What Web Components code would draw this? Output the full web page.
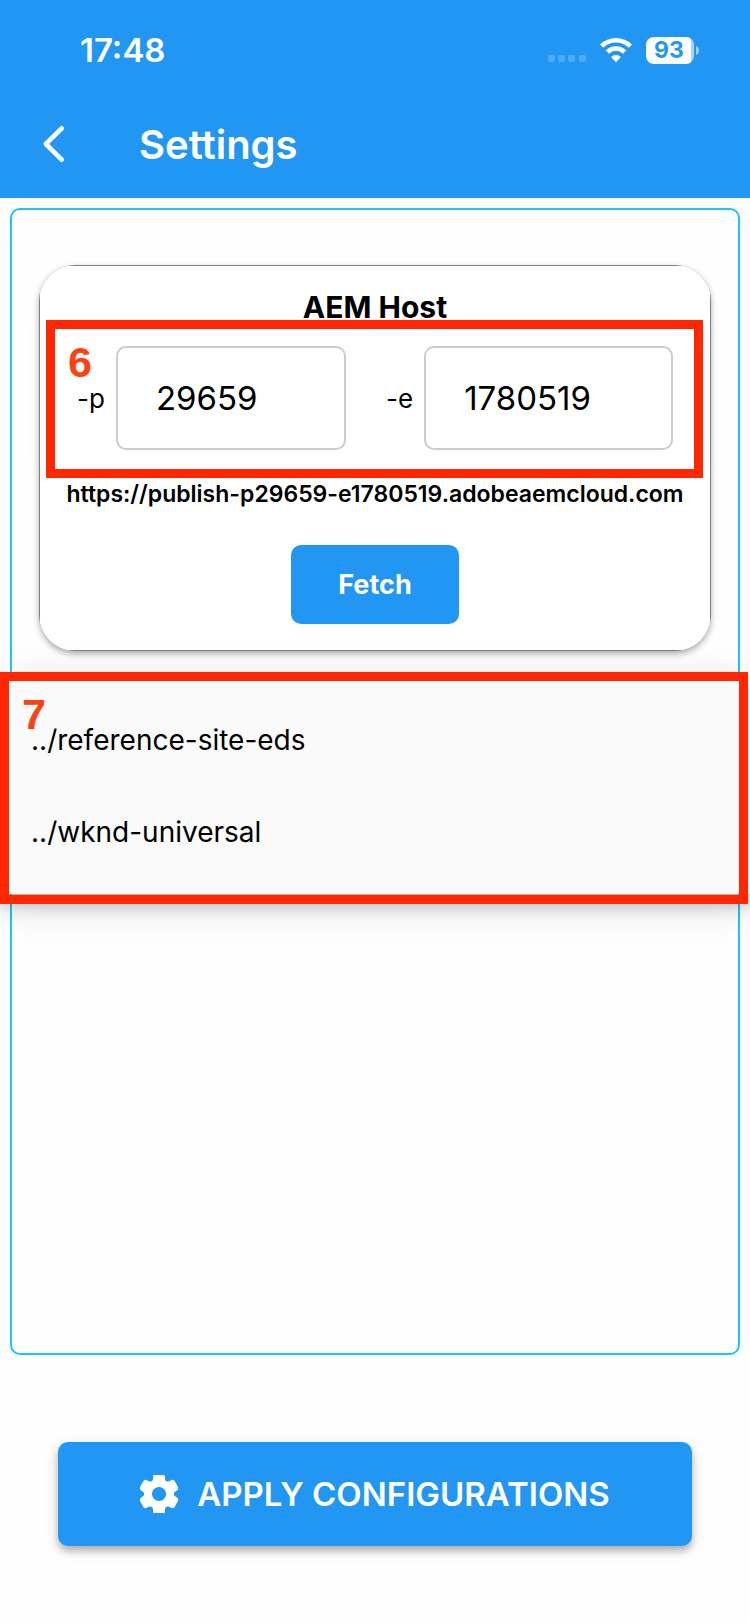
<!DOCTYPE html>
<html lang="en">
<head>
<meta charset="utf-8">
<meta name="viewport" content="width=device-width, initial-scale=1">
<title>Settings</title>
<style>
    body {
        margin: 0;
        background: #fefefe;
        color: #000;
        font-family: Inter, "Liberation Sans", sans-serif;
    }
</style>
</head>
<body>
<settings-page></settings-page>

<script>
function define(name, html, setup) {
    customElements.define(name, class extends HTMLElement {
        constructor() {
            super();
            this.attachShadow({mode: 'open'}).innerHTML = html;
        }

        connectedCallback() {
            if (setup) {
                setup(this, this.shadowRoot);
            }
        }
    });
}

define('status-bar', `
    <style>
        :host {
            display: flex;
            align-items: center;
            justify-content: space-between;
            box-sizing: border-box;
            height: 100px;
            padding: 0 51px 0 80px;
            color: #fff;
            font-size: 33px;
            font-weight: 600;
        }

        .icons {
            display: flex;
            align-items: center;
            gap: 14px;
        }

        svg {
            display: block;
        }

        .battery {
            display: flex;
            align-items: center;
            gap: 2px;
        }

        .level {
            width: 48px;
            box-sizing: border-box;
            padding-right: 2px;
            border-radius: 8px;
            background: linear-gradient(to right, #fff 45px, #a6d5fa 45px);
            color: #2196f3;
            font-size: 23px;
            font-weight: 700;
            line-height: 27px;
            text-align: center;
        }
    </style>
    <span>17:48</span>
    <div class="icons">
        <svg width="38" height="26" viewBox="0 0 38 26" fill="#fff" opacity=".2">
            <rect x="0" y="18" width="7" height="7" rx="2"/>
            <rect x="10" y="18" width="7" height="7" rx="2"/>
            <rect x="20" y="18" width="7" height="7" rx="2"/>
            <rect x="31" y="18" width="7" height="7" rx="2"/>
        </svg>
        <svg width="32" height="26" viewBox="0 0 32 26">
            <g fill="none" stroke="#fff" stroke-width="4.6">
                <path d="M1.6 9.2A20.5 20.5 0 0 1 30.4 9.2"/>
                <path d="M7.3 15A12.4 12.4 0 0 1 24.7 15"/>
            </g>
            <path d="M16 25.2 11.3 20.3Q11.2 19.8 11.7 19.4A6.8 6.8 0 0 1 20.3 19.4Q20.8 19.8 20.7 20.3Z" fill="#fff"/>
        </svg>
        <div class="battery">
            <div class="level">93</div>
            <svg width="3" height="9" viewBox="0 0 3 9"><path d="M0 0Q3 1.5 3 4.5T0 9Z" fill="#a6d5fa"/></svg>
        </div>
    </div>
`);

define('app-bar', `
    <style>
        :host {
            display: block;
            padding-bottom: 10px;
            background: #2196f3;
            color: #fff;
        }

        .title {
            display: flex;
            align-items: center;
            height: 88px;
        }

        button {
            width: 108px;
            height: 88px;
            padding: 0 0 0 42px;
            border: 0;
            background: none;
        }

        svg {
            display: block;
        }

        h1 {
            margin: 0 0 0 31px;
            font-size: 40px;
            font-weight: 600;
        }
    </style>
    <status-bar></status-bar>
    <div class="title">
        <button type="button" aria-label="Back">
            <svg width="24" height="38" viewBox="0 0 24 38" fill="none" stroke="#fff" stroke-width="4.6" stroke-linecap="round" stroke-linejoin="round"><path d="M19.7 3.3 3.8 19 19.7 34.7"/></svg>
        </button>
        <h1><slot></slot></h1>
    </div>
`);

// Red frame with a step number, laid over whatever is slotted in.
define('step-marker', `
    <style>
        :host {
            display: block;
            position: relative;
        }

        .frame {
            position: absolute;
            inset: var(--frame-inset, 0);
            border: 9px solid #ff2600;
            pointer-events: none;
        }

        .number {
            position: absolute;
            top: 9px;
            left: 13px;
            color: #ff4015;
            font: bold 43px/48px "Liberation Sans", sans-serif;
        }
    </style>
    <slot></slot>
    <div class="frame"><span class="number"></span></div>
`, function(host, root) {
    root.querySelector('.number').textContent = host.getAttribute('step');
});

define('host-field', `
    <style>
        :host {
            display: flex;
            align-items: center;
            gap: 11px;
            min-width: 0;
        }

        label {
            font-size: 26px;
        }

        input {
            flex: 1;
            min-width: 0;
            height: 104px;
            box-sizing: border-box;
            padding: 0 38px;
            border: 2px solid #ccc;
            border-radius: 10px;
            background: transparent;
            color: inherit;
            font: inherit;
            font-size: 33px;
        }
    </style>
    <label for="value"></label>
    <input id="value" type="text" inputmode="numeric">
`, function(host, root) {
    root.querySelector('label').textContent = host.getAttribute('label');
    root.querySelector('input').value = host.getAttribute('value');
});

define('host-card', `
    <style>
        :host {
            display: block;
            margin: 55px 27px 27px;
            padding: 1px;
            border-radius: 36px;
            background: #808080;
            box-shadow: 0 3px 6px rgba(0, 0, 0, .32);
            overflow: hidden;
        }

        .body {
            padding: 23px 0 26px;
            background: #fff;
            text-align: center;
        }

        h2 {
            margin: 0;
            font-size: 30px;
            font-weight: 700;
            line-height: 36px;
        }

        step-marker {
            --frame-inset: -26px 7px -28px 6px;
            margin-top: 21px;
            text-align: left;
        }

        .fields {
            display: flex;
            gap: 40px;
            padding: 0 37px;
        }

        host-field:first-child {
            flex: 15;
        }

        host-field:last-child {
            flex: 16;
        }

        p {
            margin: 29px 0 36px;
            font-size: 23px;
            font-weight: 600;
            line-height: 30px;
        }

        button {
            height: 79px;
            padding: 0 47px;
            border: 0;
            border-radius: 10px;
            background: #2196f3;
            color: #fff;
            font: inherit;
            font-size: 27px;
            font-weight: 700;
            display: block;
            margin: 0 auto;
        }
    </style>
    <div class="body">
        <h2>AEM Host</h2>
        <step-marker step="6">
            <div class="fields">
                <host-field label="-p" value="29659"></host-field>
                <host-field label="-e" value="1780519"></host-field>
            </div>
        </step-marker>
        <p>https://publish-p29659-e1780519.adobeaemcloud.com</p>
        <button type="button">Fetch</button>
    </div>
`);

define('site-list', `
    <style>
        :host {
            display: block;
            padding: 16px 31px;
            background: #fafafa;
            box-shadow: 0 10px 16px rgba(0, 0, 0, .24), 0 8px 40px rgba(0, 0, 0, .16);
        }

        ul {
            margin: 0;
            padding: 0;
            list-style: none;
        }

        li {
            font-size: 28px;
            line-height: 92px;
        }
    </style>
    <ul>
        <li>../reference-site-eds</li>
        <li>../wknd-universal</li>
    </ul>
`);

define('apply-button', `
    <style>
        :host {
            display: block;
            padding: 87px 58px 77px;
        }

        button {
            display: flex;
            align-items: center;
            justify-content: center;
            gap: 19px;
            width: 100%;
            height: 104px;
            padding: 0;
            border: 0;
            border-radius: 10px;
            background: #2196f3;
            box-shadow: 0 5px 6px rgba(0, 0, 0, .2), 0 4px 14px rgba(0, 0, 0, .16);
            color: #fff;
            font: inherit;
            font-size: 33px;
            font-weight: 600;
        }
    </style>
    <button type="button">
        <svg width="38" height="38" viewBox="2.5 2.5 19 19" fill="#fff"><path d="M19.5 12c0-.23-.01-.45-.03-.68l1.86-1.41c.4-.3.51-.86.26-1.3l-1.87-3.23c-.25-.44-.79-.62-1.25-.42l-2.15.91c-.37-.26-.76-.49-1.17-.68l-.29-2.31C14.8 2.38 14.37 2 13.87 2h-3.73c-.51 0-.94.38-1 .88l-.29 2.31c-.41.19-.8.42-1.17.68l-2.15-.91c-.46-.2-1-.02-1.25.42L2.41 8.62c-.25.44-.14.99.26 1.3l1.86 1.41c-.02.22-.03.44-.03.67s.01.45.03.68l-1.86 1.41c-.4.3-.51.86-.26 1.3l1.87 3.23c.25.44.79.62 1.25.42l2.15-.91c.37.26.76.49 1.17.68l.29 2.31c.06.5.49.88.99.88h3.73c.5 0 .93-.38.99-.88l.29-2.31c.41-.19.8-.42 1.17-.68l2.15.91c.46.2 1 .02 1.25-.42l1.87-3.23c.25-.44.14-.99-.26-1.3l-1.86-1.41c.03-.23.04-.45.04-.68zm-7.46 3.5c-1.93 0-3.5-1.57-3.5-3.5s1.57-3.5 3.5-3.5 3.5 1.57 3.5 3.5-1.57 3.5-3.5 3.5z"/></svg>
        <slot></slot>
    </button>
`);

define('settings-page', `
    <style>
        :host {
            display: flex;
            flex-direction: column;
            min-height: 100vh;
            overflow-x: clip;
        }

        main {
            flex: 1;
            margin: 10px 10px 0;
            border: 2px solid #1cc4ff;
            border-radius: 10px;
        }

        step-marker {
            --frame-inset: -6px 2px -10px 0;
            margin: 0 -12px;
        }
    </style>
    <app-bar>Settings</app-bar>
    <main>
        <host-card></host-card>
        <step-marker step="7">
            <site-list></site-list>
        </step-marker>
    </main>
    <apply-button>APPLY CONFIGURATIONS</apply-button>
`);
</script>
</body>
</html>
